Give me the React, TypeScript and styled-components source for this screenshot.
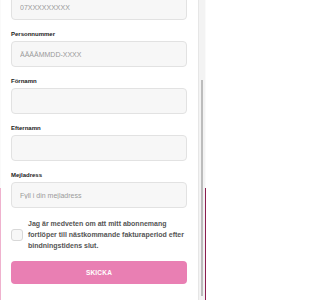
import * as React from "react";
import styled, {createGlobalStyle} from "styled-components";

const GlobalStyle = createGlobalStyle`
  html, body {
    margin: 0;
    padding: 0;
  }
  body {
    font-family: "Liberation Sans", Arial, sans-serif;
  }
`;

const Backdrop = styled.div`
  width: 206px;
  height: 300px;
  box-sizing: border-box;
  display: flex;
  padding: 0 1px;
  background:
          linear-gradient(to right, #efb2ce 0 1px, transparent 1px calc(100% - 1px), #8a1d4e calc(100% - 1px)) bottom / 100% calc(100% - 188px) no-repeat,
          #fafafa;
`;

const Modal = styled.div`
  flex: 1;
  display: flex;
  background: #fff;
  min-width: 0;
`;

const Content = styled.div`
  flex: 1;
  min-width: 0;
  display: flex;
  flex-direction: column;
  justify-content: flex-end;
  overflow: hidden;
`;

const ScrollTrack = styled.div`
  flex: none;
  width: 7px;
  box-sizing: border-box;
  display: flex;
  flex-direction: column;
  padding: 80px 2px 4px 2px;
  background: #f3f3f3;
  border-left: 1px solid #e6e6e6;
`;

const ScrollThumb = styled.div`
  flex: 1;
  background: #bcbcbc;
`;

const Form = styled.form`
  flex: none;
  display: flex;
  flex-direction: column;
  padding: 14px 11px 16px 10px;
`;

const Field = styled.label`
  display: flex;
  flex-direction: column;
  margin-bottom: 10px;
`;

const Label = styled.span`
  font-size: 6px;
  line-height: 8px;
  font-weight: 700;
  color: #222;
  margin-bottom: 3px;
`;

const Input = styled.input`
  box-sizing: border-box;
  height: 26px;
  width: 100%;
  margin: 0;
  padding: 0 8px;
  border: 1px solid #e2e2e2;
  border-radius: 4px;
  background: #f7f7f7;
  font-family: "Liberation Sans", Arial, sans-serif;
  font-size: 7px;
  color: #333;
  outline: none;

  &::placeholder {
    color: #9a9a9a;
  }
`;

const Consent = styled.label`
  display: flex;
  align-items: center;
  gap: 5px;
  margin: 0 0 10px;
`;

const Box = styled.span`
  flex: none;
  box-sizing: border-box;
  width: 12px;
  height: 12px;
  border: 1px solid #d8d8d8;
  border-radius: 3px;
  background: #f7f7f7;
`;

const ConsentText = styled.span`
  font-size: 7px;
  line-height: 11px;
  font-weight: 700;
  color: #555;
`;

const Submit = styled.button`
  height: 23px;
  border: none;
  border-radius: 4px;
  background: #e97fb3;
  color: #fff;
  font-family: "Liberation Sans", Arial, sans-serif;
  font-size: 6.5px;
  font-weight: 700;
  letter-spacing: 0.2px;
  cursor: pointer;
`;

// the phone field's label is scrolled out of view above the top edge
const fields = [
    {name: "phone", label: "", placeholder: "07XXXXXXXXX"},
    {name: "ssn", label: "Personnummer", placeholder: "ÅÅÅÅMMDD-XXXX"},
    {name: "first", label: "Förnamn", placeholder: ""},
    {name: "last", label: "Efternamn", placeholder: ""},
    {name: "email", label: "Mejladress", placeholder: "Fyll i din mejladress"},
];

export default function App() {
    return (
        <>
            <GlobalStyle/>
            <Backdrop>
                <Modal>
                    <Content>
                        <Form onSubmit={e => e.preventDefault()}>
                            {fields.map(f => (
                                <Field key={f.name}>
                                    {f.label && <Label>{f.label}</Label>}
                                    <Input name={f.name} placeholder={f.placeholder}/>
                                </Field>
                            ))}
                            <Consent>
                                <Box/>
                                <ConsentText>
                                    Jag är medveten om att mitt abonnemang fortlöper till nästkommande fakturaperiod efter bindningstidens slut.
                                </ConsentText>
                            </Consent>
                            <Submit type="submit">SKICKA</Submit>
                        </Form>
                    </Content>
                    <ScrollTrack>
                        <ScrollThumb/>
                    </ScrollTrack>
                </Modal>
            </Backdrop>
        </>
    );
}
